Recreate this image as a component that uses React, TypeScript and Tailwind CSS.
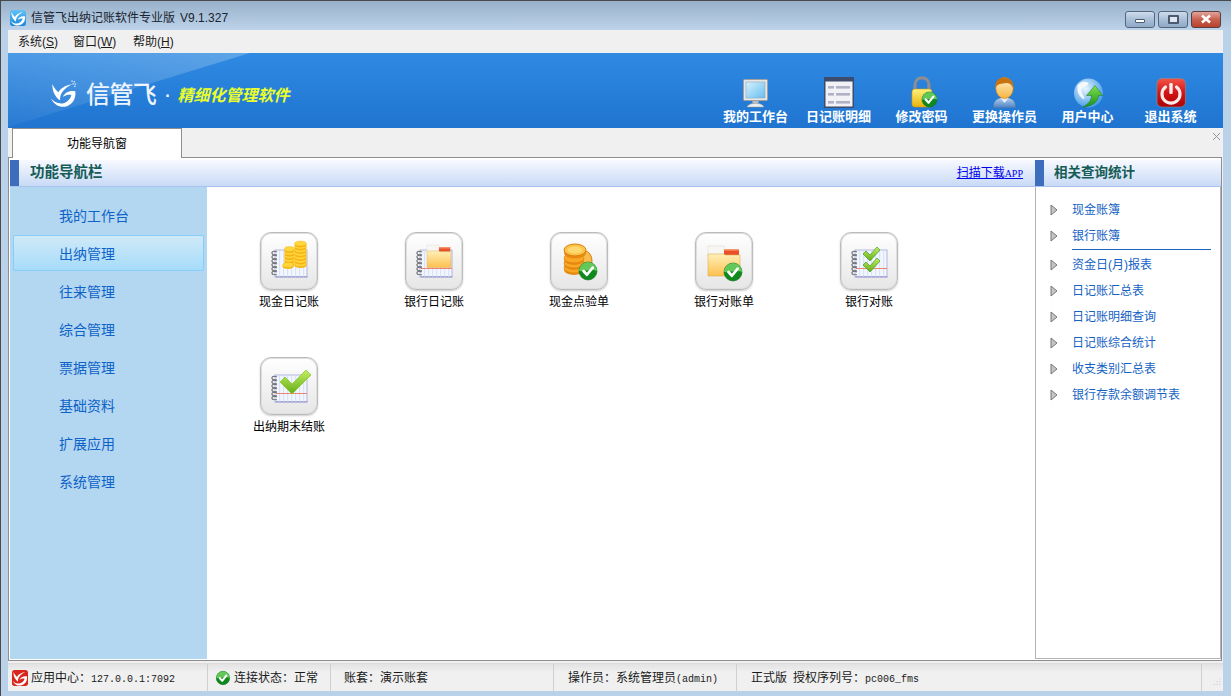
import React from "react";

const Swoosh = ({ dots = false }: { dots?: boolean }) => (
  <>
    <path d="M2 3 C2 10 5 15 9 17.5 C8.5 12 12 7 20 3 C13 4.5 9 7 7.5 10.5 C5.5 8.5 3.5 6 2 3Z" fill="#fff" />
    <path d="M22.5 9.5 C17.5 8.5 13 10.5 11.5 14.5 C14.5 12.5 17.5 12.3 19 13 C17.5 18 13 21 8.5 20.3 C5.5 20 3 18.3 1 16 C3.5 21.5 8.5 24 13 23.3 C19 22.3 23.5 17 22.5 9.5Z" fill="#fff" />
    {dots && (
      <g fill="#dcecfb">
        <rect x="19" y="0" width="1.2" height="1.2" />
        <rect x="21" y="0.5" width="1.2" height="1.2" />
        <rect x="20" y="2.4" width="1.2" height="1.2" />
        <rect x="22" y="2.6" width="1.2" height="1.2" />
        <rect x="21.5" y="4.6" width="1.2" height="1.2" />
      </g>
    )}
  </>
);

const Check = ({ cx, cy, r = 9 }: { cx: number; cy: number; r?: number }) => (
  <g>
    <circle cx={cx} cy={cy} r={r} fill="#0e8a1c" stroke="#0a6d16" strokeWidth="0.6" />
    <path d={`M${cx - r} ${cy} A${r} ${r} 0 0 1 ${cx + r} ${cy} C${cx + r * 0.4} ${cy - r * 0.3} ${cx - r * 0.4} ${cy + r * 0.1} ${cx - r} ${cy}Z`} fill="#62c85a" />
    <path
      d={`M${cx - r * 0.5} ${cy} L${cx - r * 0.12} ${cy + r * 0.42} L${cx + r * 0.52} ${cy - r * 0.38}`}
      fill="none"
      stroke="#fff"
      strokeWidth={r * 0.3}
      strokeLinecap="round"
      strokeLinejoin="round"
    />
  </g>
);

const Notebook = ({ redLine = 0 }: { redLine?: number }) => (
  <g>
    <rect x="15" y="18" width="32" height="27" fill="#f4f6fd" stroke="#a4a6d4" strokeWidth="0.8" />
    <rect x="15.5" y="44" width="32" height="1.5" fill="#a6a6d4" />
    {[19, 23, 27, 31, 35, 39, 43].map((x) => (
      <rect key={x} x={x} y="18.5" width="1.2" height="26" fill="#d6e3fb" />
    ))}
    {redLine ? <rect x="16" y={redLine} width="31" height="0.8" fill="#ee6a50" /> : null}
    {[20, 24, 28, 32, 36, 40].map((y) => (
      <path key={y} d={`M17 ${y} C12.5 ${y - 2} 10.5 ${y + 1} 13 ${y + 2.5} L17 ${y + 2.8}`} fill="none" stroke="#6a6d74" strokeWidth="1.1" />
    ))}
  </g>
);

const Coin = ({ x, y, w }: { x: number; y: number; w: number }) => (
  <g>
    <ellipse cx={x} cy={y + 1.5} rx={w / 2} ry="2.6" fill="#f7b511" />
    <ellipse cx={x} cy={y} rx={w / 2} ry="2.4" fill="#ffd63c" stroke="#f2b414" strokeWidth="0.4" />
  </g>
);

const Folder = ({ x, y, s }: { x: number; y: number; s: number }) => (
  <g transform={`translate(${x} ${y}) scale(${s})`}>
    <rect x="0" y="0" width="16" height="10" fill="#f8f6f2" stroke="#dedad4" strokeWidth="0.5" />
    <rect x="16" y="3" width="15" height="6" fill="#e9502a" />
    <rect x="16" y="3" width="15" height="1.6" fill="#f59a6e" />
    <path d="M0 8 H16 L17 9 H32 V30 H0Z" fill="url(#fold)" stroke="#dcb056" strokeWidth="0.6" />
  </g>
);

const Tile = ({ children }: { children: React.ReactNode }) => (
  <div className="h-[58px] w-[58px] rounded-[11px] border border-[#bcbcbc] bg-gradient-to-b from-white to-[#e6e6e6] shadow-[0_1px_2px_rgba(0,0,0,0.2),inset_0_0_0_1px_#dedede]">
    <svg width="58" height="58" viewBox="0 0 58 58" className="-m-px block">
      {children}
    </svg>
  </div>
);

const GradDefs = () => (
  <svg width="0" height="0" className="absolute">
    <defs>
      <linearGradient id="fold" x1="0" y1="0" x2="0" y2="1">
        <stop offset="0" stopColor="#fff0b8" />
        <stop offset="1" stopColor="#fdc04e" />
      </linearGradient>
      <linearGradient id="greenCk" x1="0" y1="0" x2="0" y2="1">
        <stop offset="0" stopColor="#c5ee60" />
        <stop offset="1" stopColor="#62ad16" />
      </linearGradient>
      <linearGradient id="screen" x1="0" y1="0" x2="1" y2="1">
        <stop offset="0" stopColor="#d6f2fd" />
        <stop offset="1" stopColor="#68bdf0" />
      </linearGradient>
      <linearGradient id="lockB" x1="0" y1="0" x2="0" y2="1">
        <stop offset="0" stopColor="#fff27a" />
        <stop offset="1" stopColor="#e8b30e" />
      </linearGradient>
      <linearGradient id="face" x1="0" y1="0" x2="0" y2="1">
        <stop offset="0" stopColor="#fff0c8" />
        <stop offset="1" stopColor="#f8b542" />
      </linearGradient>
      <linearGradient id="body" x1="0" y1="0" x2="0" y2="1">
        <stop offset="0" stopColor="#bcd8f4" />
        <stop offset="1" stopColor="#4b7fc0" />
      </linearGradient>
      <linearGradient id="pw" x1="0" y1="0" x2="0" y2="1">
        <stop offset="0" stopColor="#f0554a" />
        <stop offset="0.5" stopColor="#d41414" />
        <stop offset="1" stopColor="#a80404" />
      </linearGradient>
      <radialGradient id="globe" cx="0.4" cy="0.35" r="0.75">
        <stop offset="0" stopColor="#e8f6ff" />
        <stop offset="1" stopColor="#2e8fe6" />
      </radialGradient>
      <linearGradient id="arrow" x1="0" y1="0" x2="0" y2="1">
        <stop offset="0" stopColor="#7fe04a" />
        <stop offset="1" stopColor="#1c8f1e" />
      </linearGradient>
      <linearGradient id="logoB" x1="0" y1="0" x2="0" y2="1">
        <stop offset="0" stopColor="#62c2f6" />
        <stop offset="1" stopColor="#1a86dc" />
      </linearGradient>
    </defs>
  </svg>
);

const TileCash = () => (
  <Tile>
    <Notebook />
    {[32, 28.5, 25, 21.5, 18, 14.5, 11.5].map((y) => (
      <Coin key={y} x={40.5} y={y} w={12} />
    ))}
    {[31, 27.5, 24, 20.5, 17].map((y) => (
      <Coin key={y} x={29.5} y={y} w={10} />
    ))}
    <Coin x={28} y={33} w={11} />
  </Tile>
);
const TileBank = () => (
  <Tile>
    <Notebook redLine={36} />
    <Folder x={22} y={13} s={0.75} />
  </Tile>
);
const TileCoins = () => (
  <Tile>
    <ellipse cx="35" cy="29" rx="7" ry="10" fill="#f6bd4c" stroke="#d97f10" />
    {[36, 31, 26].map((y) => (
      <g key={y}>
        <ellipse cx="24" cy={y + 2} rx="10" ry="5" fill="#e98a12" />
        <ellipse cx="24" cy={y} rx="10" ry="5" fill="#f9a826" stroke="#d97f10" strokeWidth="0.6" />
      </g>
    ))}
    <ellipse cx="25" cy="21" rx="11" ry="5.5" fill="#e98a12" />
    <ellipse cx="25" cy="18" rx="11" ry="6" fill="#fbc347" stroke="#d97f10" />
    <ellipse cx="25" cy="18" rx="7.5" ry="3.6" fill="#fdd86e" />
    <Check cx={38} cy={39} r={9} />
  </Tile>
);
const TileBankCheck = () => (
  <Tile>
    <Folder x={13} y={14} s={1} />
    <Check cx={38} cy={40} r={9} />
  </Tile>
);
const SmallCk = ({ y }: { y: number }) => (
  <path
    d={`M23 ${y} L26 ${y - 3} L30 ${y + 1} L37 ${y - 7} L40 ${y - 4} L30 ${y + 7}Z`}
    fill="url(#greenCk)"
    stroke="#3f9a2c"
    strokeWidth="0.7"
  />
);
const TileRecon = () => (
  <Tile>
    <Notebook redLine={36} />
    <SmallCk y={22} />
    <SmallCk y={33} />
  </Tile>
);
const TileClose = () => (
  <Tile>
    <Notebook redLine={36} />
    <path d="M20 25 L25 20 L32 27 L46 13 L51 18 L32 37Z" fill="url(#greenCk)" stroke="#8cc63a" strokeWidth="0.8" />
  </Tile>
);

const IconMonitor = () => (
  <svg width="31" height="34" viewBox="0 0 31 34">
    <rect x="3.5" y="5.5" width="24" height="21" rx="1" fill="#e6e6e6" stroke="#9f9f9f" />
    <rect x="6" y="8" width="19" height="16" fill="url(#screen)" stroke="#7f9fb5" strokeWidth="0.5" />
    <rect x="12.5" y="27" width="6" height="2" fill="#bdbdbd" />
    <path d="M7 33 C9 28 22 28 24 33Z" fill="#ededed" stroke="#9c9c9c" strokeWidth="0.5" />
  </svg>
);
const IconList = () => (
  <svg width="31" height="34" viewBox="0 0 31 34">
    <rect x="1" y="3" width="30" height="31" fill="#3d4b6c" />
    <rect x="2.5" y="7.5" width="27" height="25" fill="#f2f2f6" />
    {[13, 20, 28].map((y) => (
      <g key={y} fill="#b0b0c6">
        <rect x="5" y={y - 1} width="6" height="2.6" />
        <rect x="13" y={y - 1} width="14" height="2.6" />
      </g>
    ))}
  </svg>
);
const IconLock = () => (
  <svg width="31" height="34" viewBox="0 0 31 34">
    <path d="M9 17 V11 C9 1.5 23 1.5 23 11 V17" fill="none" stroke="#8d8d92" strokeWidth="3.2" />
    <rect x="6" y="15" width="20" height="18" rx="3" fill="url(#lockB)" stroke="#c99b10" strokeWidth="0.6" />
    <Check cx={23.5} cy={25.5} r={7.5} />
  </svg>
);
const IconUser = () => (
  <svg width="31" height="34" viewBox="0 0 31 34">
    <path d="M4 34 C4 25 10 24 15.5 23 C21 24 27 25 27 34Z" fill="url(#body)" stroke="#3f6aa6" strokeWidth="0.5" />
    <path d="M11.5 24 L15.5 29 L19.5 24Z" fill="#e8f0fa" />
    <ellipse cx="15.5" cy="14" rx="8.8" ry="10.5" fill="url(#face)" stroke="#c97a12" strokeWidth="0.6" />
    <path d="M6.5 14 C5.5 5 12 3 16 3.5 C22 4 25 9 24.2 15 C23 10 20 9 17 9 C13 10 8.5 9 6.5 14Z" fill="#c87312" />
  </svg>
);
const IconGlobe = () => (
  <svg width="31" height="34" viewBox="0 0 31 34">
    <circle cx="16.5" cy="19" r="14.5" fill="url(#globe)" />
    <path d="M5.5 11.5 C9.5 6.5 15.5 7.5 16.5 9.5 C14.5 13.5 10.5 12.5 9.5 16.5 C9.5 20.5 12.5 21.5 12.5 25.5 C7.5 23.5 4.5 17.5 5.5 11.5Z" fill="#f4f8fb" />
    <path d="M23 11.5 L30.7 21.5 L26.5 21.5 C26.5 27 22 32 11 33 C16 30 19.5 27 19.5 21.5 L14.5 21.5Z" fill="url(#arrow)" stroke="#157a19" strokeWidth="0.5" />
  </svg>
);
const IconPower = () => (
  <svg width="31" height="34" viewBox="0 0 31 34">
    <rect x="2" y="4.5" width="28.4" height="28.5" rx="5" fill="url(#pw)" stroke="#8e8e8e" strokeWidth="0.6" />
    <path d="M10.5 13 A9 9 0 1 0 21.5 13" fill="none" stroke="#fbeaea" strokeWidth="3.2" strokeLinecap="round" />
    <rect x="14.3" y="9" width="3.4" height="11" rx="1.2" fill="#fbeaea" />
  </svg>
);

const tools = [
  ["我的工作台", IconMonitor],
  ["日记账明细", IconList],
  ["修改密码", IconLock],
  ["更换操作员", IconUser],
  ["用户中心", IconGlobe],
  ["退出系统", IconPower],
] as const;

const nav = ["我的工作台", "出纳管理", "往来管理", "综合管理", "票据管理", "基础资料", "扩展应用", "系统管理"];
const tiles = [
  ["现金日记账", TileCash],
  ["银行日记账", TileBank],
  ["现金点验单", TileCoins],
  ["银行对账单", TileBankCheck],
  ["银行对账", TileRecon],
  ["出纳期末结账", TileClose],
] as const;

const Tri = () => (
  <svg width="8" height="12" viewBox="0 0 8 12">
    <path d="M1 1 L7 6 L1 11Z" fill="#c4c4c4" stroke="#777" strokeWidth="1" />
  </svg>
);

const QueryRow = ({ t }: { t: string }) => (
  <div className="flex h-[26px] items-center pl-[14px]">
    <Tri />
    <span className="ml-[14px] text-[#1462c4]">{t}</span>
  </div>
);

const WinBtn = ({ kind }: { kind: "min" | "max" | "close" }) => (
  <div
    className={
      kind === "close"
        ? "flex h-[17px] w-[30px] items-center justify-center rounded-[3px] border border-[#5d3d40] bg-gradient-to-b from-[#e0a49a] via-[#c8604e] to-[#b8402e]"
        : "flex h-[17px] w-[30px] items-center justify-center rounded-[3px] border border-[#55677e] bg-gradient-to-b from-[#cfdceb] via-[#a9bfd8] to-[#8fa9c7]"
    }
  >
    {kind === "min" && <div className="mt-[3px] h-[4px] w-[10px] rounded-[1px] border border-[#4c5a70] bg-white" />}
    {kind === "max" && (
      <div className="h-[9px] w-[11px] rounded-[1px] border-2 border-[#4c5a70] bg-[#dfe8f2]" />
    )}
    {kind === "close" && (
      <svg width="12" height="10" viewBox="0 0 12 10">
        <path d="M2 1.5 L10 8.5 M10 1.5 L2 8.5" stroke="#fff" strokeWidth="2.6" />
      </svg>
    )}
  </div>
);

const Cell = ({ w, children, pl }: { w: string; children: React.ReactNode; pl: string }) => (
  <div className={`${w} ${pl} flex h-full shrink-0 items-center gap-[3px] border-r border-[#cfcfcf]`}>{children}</div>
);

const Mono = ({ children }: { children: React.ReactNode }) => (
  <span className="font-['Liberation_Mono',monospace] text-[10px]">{children}</span>
);

const SectionBar = ({ children }: { children: React.ReactNode }) => (
  <div className="flex h-[27px] items-center border-b border-[#a9c4ec] bg-gradient-to-b from-[#f7f9ff] to-[#c9daf6]">
    <div className="h-full w-[9px] shrink-0 bg-[#3d6ebd]" />
    {children}
  </div>
);

export default function App() {
  return (
    <div className="flex h-[696px] w-[1231px] flex-col overflow-hidden border-t border-l border-[#4a4a4a] bg-[#b9d2ea] font-['Liberation_Sans','Noto_Sans_CJK_SC',sans-serif] text-[12px] text-black">
      <GradDefs />
      <div className="flex h-[29px] shrink-0 items-center bg-gradient-to-b from-[#98b1ca] to-[#bcd3e9] pr-[10px] pl-[9px]">
        <svg width="16" height="16" viewBox="0 0 24 24" className="mt-[5px]">
          <rect x="0" y="0" width="24" height="24" rx="4" fill="url(#logoB)" />
          <Swoosh />
        </svg>
        <span className="mt-[5px] ml-[5px] text-[#1a2430]">信管飞出纳记账软件专业版</span>
        <span className="mt-[5px] ml-[5px] text-[#1a2430]">V9.1.327</span>
        <div className="mt-[7px] ml-auto flex gap-[3px]">
          <WinBtn kind="min" />
          <WinBtn kind="max" />
          <WinBtn kind="close" />
        </div>
      </div>

      <div className="ml-[7px] flex w-[1215px] flex-1 flex-col bg-[#f0f0f0]">
        <div className="flex h-[23px] shrink-0 items-center pl-[10px] text-[#1b1b1b]">
          <span className="w-[55px]">系统(<u>S</u>)</span>
          <span className="w-[60px]">窗口(<u>W</u>)</span>
          <span>帮助(<u>H</u>)</span>
        </div>

        <div className="relative flex h-[75px] shrink-0 items-start justify-between overflow-hidden bg-gradient-to-b from-[#2f8ae2] to-[#1f74d0] pr-[11px]">
          <svg width="250" height="75" viewBox="0 0 250 75" className="absolute top-0 left-0">
            <defs>
              <linearGradient id="sheen" x1="0" y1="1" x2="0.9" y2="0">
                <stop offset="0" stopColor="#fff" stopOpacity="0.04" />
                <stop offset="1" stopColor="#fff" stopOpacity="0.22" />
              </linearGradient>
            </defs>
            <path d="M0 0 H242 L0 74Z" fill="url(#sheen)" />
          </svg>
          <div className="relative mt-[25px] ml-[42px] flex items-center">
            <svg width="27" height="28" viewBox="0 0 24 24">
              <Swoosh dots />
            </svg>
            <span className="mt-[2px] ml-[9px] text-[24px] leading-[30px] font-medium tracking-[-0.6px] text-[#eef5fd]">信管飞</span>
            <span className="mt-[4px] ml-[9px] text-[16px] leading-[20px] font-bold text-white">·</span>
            <span className="mt-[4px] ml-[7px] text-[16px] leading-[22px] font-bold italic text-[#eaff2a]">精细化管理软件</span>
          </div>
          <div className="relative mt-[21px] flex">
            {tools.map(([t, I]) => (
              <div key={t} className="flex w-[83px] flex-col items-center">
                <I />
                <span className="text-[13px] leading-[18px] font-bold whitespace-nowrap text-white">{t}</span>
              </div>
            ))}
          </div>
        </div>

        <div className="relative flex h-[29px] shrink-0 items-start pl-[4px]">
          <div className="z-10 flex h-[30px] w-[170px] items-center justify-center border-x border-t border-[#8e8e8e] bg-white">
            功能导航窗
          </div>
          <svg width="9" height="9" viewBox="0 0 9 9" className="absolute top-[4px] right-[2px]">
            <path d="M1 1 L8 8 M8 1 L1 8" stroke="#8a97a6" strokeWidth="1" />
          </svg>
        </div>

        <div className="flex h-[504px] w-[1214px] shrink-0 border border-[#8e8e8e] bg-white pt-[2px] pb-px pl-px">
          <div className="flex w-[1025px] shrink-0 flex-col">
            <SectionBar>
              <span className="ml-[11px] text-[14.5px] font-bold text-[#155c55]">功能导航栏</span>
              <a className="mr-[12px] ml-auto text-[#0000ee] underline">
                扫描下载<span className="font-['Liberation_Serif',serif] text-[10px]">APP</span>
              </a>
            </SectionBar>
            <div className="flex min-h-0 flex-1">
              <div className="flex w-[197px] shrink-0 flex-col bg-[#b3d7f1] pt-[10px] text-[14px] text-[#0f62c8]">
                {nav.map((n) => (
                  <div key={n} className="flex h-[38px] items-start px-[3px]">
                    <div
                      className={
                        n === "出纳管理"
                          ? "flex h-[36px] w-full items-center rounded-[2px] border border-[#86cdf8] bg-gradient-to-b from-[#cfe9f7] to-[#a6dcfa] pt-[2px] pl-[45px]"
                          : "flex h-[38px] w-full items-center pl-[46px]"
                      }
                    >
                      {n}
                    </div>
                  </div>
                ))}
              </div>
              <div className="flex flex-1 flex-wrap content-start gap-x-px pt-[45px] pl-[10px]">
                {tiles.map(([t, I]) => (
                  <div key={t} className="flex h-[125px] w-[144px] flex-col items-center">
                    <I />
                    <span className="mt-[3px] leading-[18px] whitespace-nowrap">{t}</span>
                  </div>
                ))}
              </div>
            </div>
          </div>
          <div className="flex min-w-0 flex-1 flex-col">
            <SectionBar>
              <span className="ml-[10px] text-[13.5px] font-bold text-[#155c55]">相关查询统计</span>
            </SectionBar>
            <div className="flex-1 border-x border-b border-[#b4b4b4] pt-[10px]">
              <QueryRow t="现金账簿" />
              <QueryRow t="银行账簿" />
              <div className="mr-[9px] mb-[2px] ml-[36px] h-px bg-[#1c66c0]" />
              {["资金日(月)报表", "日记账汇总表", "日记账明细查询", "日记账综合统计", "收支类别汇总表", "银行存款余额调节表"].map((t) => (
                <QueryRow key={t} t={t} />
              ))}
            </div>
          </div>
        </div>

        <div className="mt-[2px] flex h-[28px] shrink-0 items-center border-t border-[#dcdcdc] bg-gradient-to-b from-[#e2e2e2] to-[#f0f0f0] to-30% text-[#1a1a1a]">
          <Cell w="w-[200px]" pl="pl-[4px]">
            <svg width="16" height="16" viewBox="0 0 24 24">
              <rect x="0" y="0" width="24" height="24" rx="4" fill="#d9261c" />
              <Swoosh />
            </svg>
            <span>
              应用中心：<Mono>127.0.0.1:7092</Mono>
            </span>
          </Cell>
          <Cell w="w-[123px]" pl="pl-[7px]">
            <svg width="16" height="16" viewBox="0 0 18 18">
              <Check cx={9} cy={9} r={7.5} />
            </svg>
            <span>连接状态：正常</span>
          </Cell>
          <Cell w="w-[223px]" pl="pl-[13px]">账套：演示账套</Cell>
          <Cell w="w-[183px]" pl="pl-[14px]">
            <span>
              操作员：系统管理员<Mono>(admin)</Mono>
            </span>
          </Cell>
          <Cell w="w-[465px]" pl="pl-[14px]">
            <span>
              正式版<span className="ml-[6px]">授权序列号：</span><Mono>pc006_fms</Mono>
            </span>
          </Cell>
          <svg width="12" height="12" viewBox="0 0 12 12" className="mt-[10px] ml-[10px]">
            <g fill="#bdbdbd">
              <rect x="8" y="1" width="1" height="1" />
              <rect x="5" y="4" width="1" height="1" />
              <rect x="8" y="4" width="1" height="1" />
              <rect x="2" y="7" width="1" height="1" />
              <rect x="5" y="7" width="1" height="1" />
              <rect x="8" y="7" width="1" height="1" />
            </g>
          </svg>
        </div>
      </div>
      <div className="h-[5px] shrink-0" />
      <div className="h-px shrink-0 bg-[#2a8296]" />
    </div>
  );
}
